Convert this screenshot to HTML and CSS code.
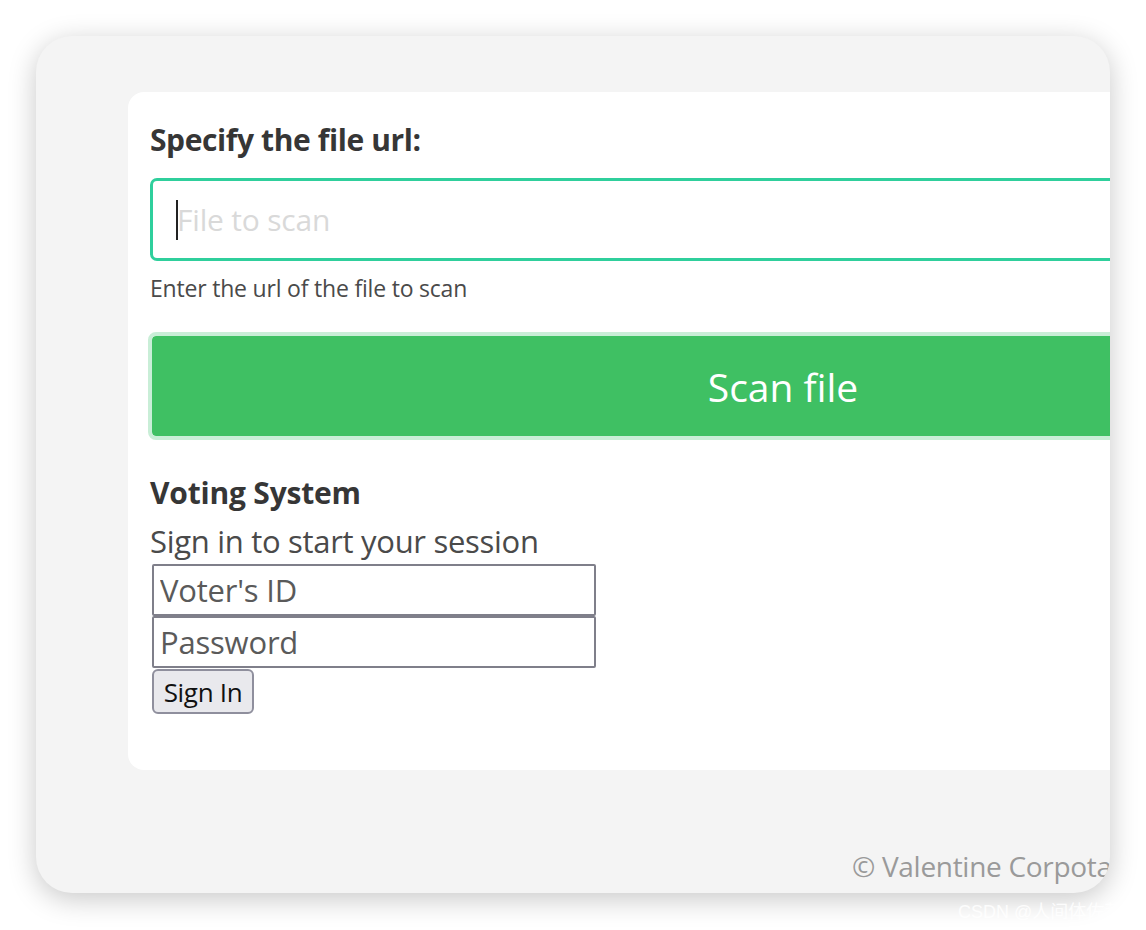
FILE: index.html
```html
<!DOCTYPE html>
<html lang="en">
<head>
<meta charset="utf-8">
<title>Valentine Scanner</title>
<link rel="stylesheet" href="styles.css">
</head>
<body>
<div class="window">
  <div class="page">
    <section class="box">
      <div class="field">
        <label class="label" for="url">Specify the file url:</label>
        <div class="control">
          <input id="url" class="input" type="text" placeholder="File to scan">
          <span class="caret"></span>
        </div>
        <p class="help">Enter the url of the file to scan</p>
      </div>
      <button class="scan" type="button">Scan file</button>
      <div class="voting">
        <h3 class="voting-title">Voting System</h3>
        <p class="voting-sub">Sign in to start your session</p>
        <form class="login">
          <input class="login-input" type="text" placeholder="Voter's ID">
          <input class="login-input" type="password" placeholder="Password">
          <button class="login-btn" type="button">Sign In</button>
        </form>
      </div>
    </section>
    <footer class="footer">© Valentine Corpotation</footer>
  </div>
</div>
<div class="watermark">CSDN @人间体佐菲</div>
</body>
</html>
```

FILE: styles.css
```css
html, body {
  margin: 0;
  padding: 0;
  background: #ffffff;
}

body {
  padding: 36px;
  font-family: "Open Sans", "Noto Sans", "Noto Sans CJK SC", sans-serif;
  color: #4a4a4a;
}

.window {
  width: 1074px;
  height: 857px;
  border-radius: 36px;
  background: #f4f4f4;
  overflow: hidden;
  box-shadow: 0 6px 28px rgba(0, 0, 0, 0.22);
}

.page {
  width: 1500px;
  padding: 56px 0 0 92px;
  box-sizing: border-box;
}

.box {
  width: 1310px;
  background: #ffffff;
  border-radius: 16px;
  padding: 28px 22px 56px 22px;
  box-sizing: border-box;
}

.label {
  display: block;
  font-size: 30px;
  font-weight: 700;
  line-height: 40px;
  color: #363636;
  letter-spacing: -0.4px;
}

.control {
  position: relative;
  margin-top: 18px;
}

.input {
  display: block;
  width: 100%;
  height: 83px;
  box-sizing: border-box;
  border: 3px solid #2fcf9c;
  border-radius: 7px;
  padding: 0 24px;
  font-family: inherit;
  font-size: 30px;
  color: #363636;
  background: #fff;
  outline: none;
}

.input::placeholder {
  color: #d9d9d9;
  letter-spacing: -0.2px;
}

.caret {
  position: absolute;
  left: 26px;
  top: 22px;
  width: 2px;
  height: 40px;
  background: #222;
}

.help {
  margin: 12px 0 0 0;
  font-size: 23px;
  line-height: 30px;
  color: #4a4a4a;
  letter-spacing: -0.2px;
}

.scan {
  display: block;
  width: calc(100% + 4px);
  margin: 29px -2px 0 -2px;
  height: 108px;
  box-sizing: border-box;
  border: 4px solid #c9eed7;
  border-radius: 8px;
  background: #3fc063;
  background-clip: padding-box;
  color: #ffffff;
  font-family: inherit;
  font-size: 39px;
  cursor: pointer;
}

.voting {
  margin-top: 33px;
}

.voting-title {
  margin: 0;
  font-size: 30px;
  font-weight: 700;
  line-height: 40px;
  color: #363636;
  letter-spacing: -0.2px;
}

.voting-sub {
  margin: 8px 0 3px 0;
  font-size: 31px;
  line-height: 40px;
  color: #4a4a4a;
  letter-spacing: -0.3px;
}

.login {
  display: flex;
  flex-direction: column;
  align-items: flex-start;
  margin-left: 2px;
}

.login-input {
  width: 444px;
  height: 52px;
  box-sizing: border-box;
  border: 2px solid #7f7f8a;
  border-radius: 2px;
  padding: 0 6px;
  font-family: inherit;
  font-size: 31px;
  color: #333;
  background: #fff;
  outline: none;
}

.login-input::placeholder {
  color: #5a5a5a;
  letter-spacing: -0.2px;
}

.login-btn {
  margin-top: 1px;
  width: 102px;
  height: 45px;
  box-sizing: border-box;
  border: 2px solid #8f8f9d;
  border-radius: 6px;
  background: #e9e9ed;
  color: #111;
  font-family: inherit;
  font-size: 26px;
  line-height: 1;
  padding: 0;
  letter-spacing: -0.3px;
}

.footer {
  padding: 76px 0 0 724px;
  font-size: 28px;
  line-height: 40px;
  color: #9a9a9a;
  letter-spacing: -0.3px;
  white-space: nowrap;
}

.watermark {
  position: absolute;
  left: 958px;
  top: 897px;
  font-family: "Liberation Sans", "Noto Sans CJK SC", sans-serif;
  font-size: 18px;
  color: rgba(255, 255, 255, 0.85);
  white-space: nowrap;
}
```
